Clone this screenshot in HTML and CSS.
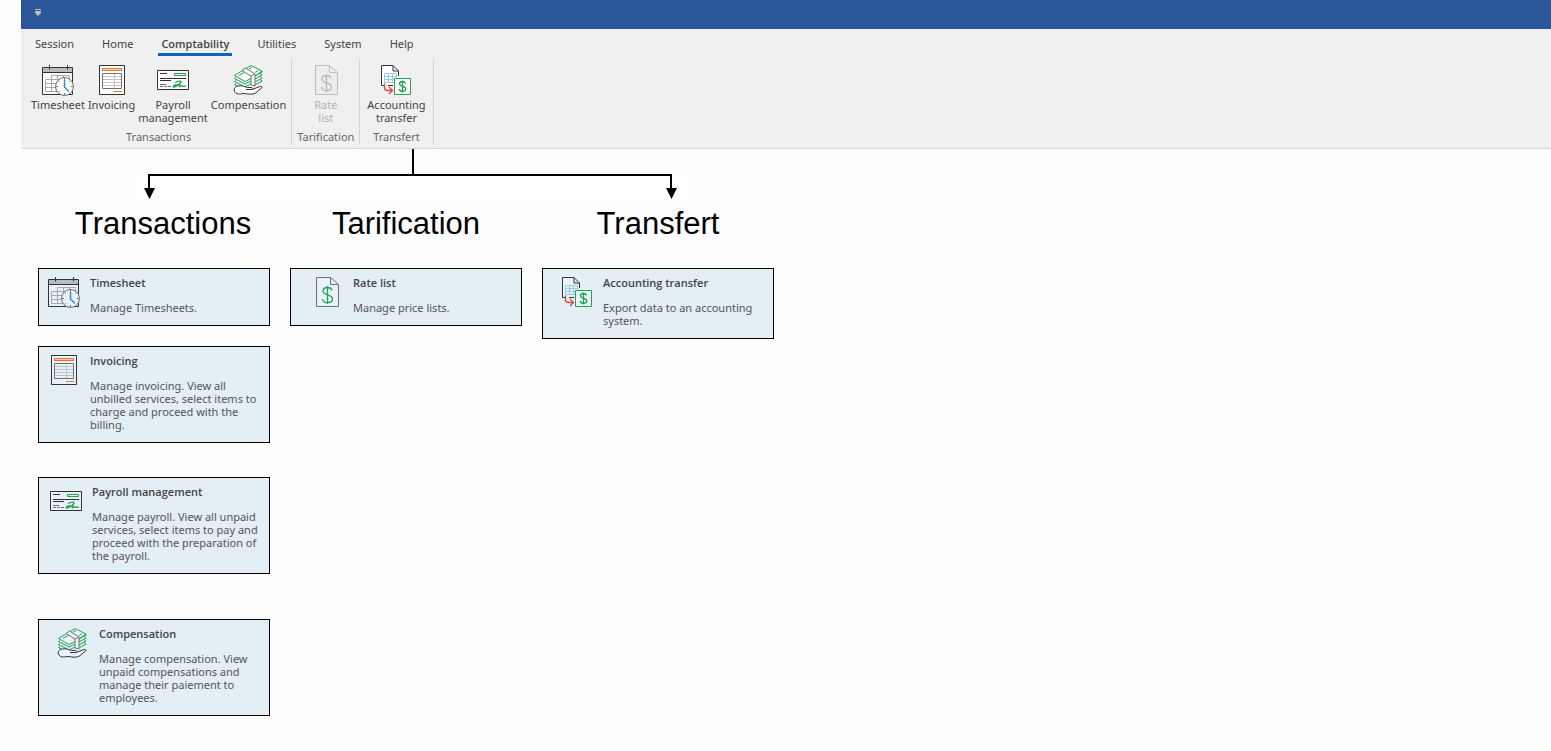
FILE: index.html
```html
<!DOCTYPE html>
<html lang="en">
<head>
<meta charset="utf-8">
<title>Comptability</title>
<link rel="stylesheet" href="styles.css">
</head>
<body>
<svg class="sprite" aria-hidden="true">
  <symbol id="i-timesheet" viewBox="0 0 32 32">
    <path class="paper ink" d="M.5 3.5h30v27H.5z"/>
    <path class="shade" d="M1 4h29v4H1z"/>
    <path class="ink" d="M.5 8.5h30M7.5 1v4.500M25.500 1v4.500"/>
    <path class="grid" d="M9.500 11.500h18M3.500 15.500h24M3.500 19.500h24M3.500 23.500h24M3.500 27.500h18M3.500 15.500v12M9.500 11.500v16M15.500 11.500v16M21.500 11.500v16M27.500 11.500v12"/>
    <circle class="paper rim" cx="22.500" cy="22.500" r="9"/>
    <path class="rim" d="M22.500 14v2M22.500 29v2M14 22.500h2M29 22.500h2M16.700 16.700l1 1M27.300 17.700l1-1M16.700 28.300l1-1"/>
    <path class="blue" d="M22.500 16v7l4.500 4.500"/>
  </symbol>
  <symbol id="i-invoicing" viewBox="0 0 32 32">
    <path class="paper ink" d="M3.500 1.500h25v29h-25z"/>
    <path class="orange" d="M6.500 4.500h19v2h-19z"/>
    <path class="grid light" d="M7 12.500h18M7 15.500h18M7 18.500h18M7 21.500h18M18.500 10v14"/>
    <path class="rim" d="M6.500 9.500h19v15h-19z"/>
    <path class="orange" d="M18 27.500h8"/>
  </symbol>
  <symbol id="i-payroll" viewBox="0 0 32 32">
    <path class="paper ink" d="M.5 6.500h31v19H.5z"/>
    <path class="ink" d="M3 9.500h7M3 14.500h26M3 16.500h11"/>
    <path class="rim" d="M3 20.500h6M3 22.500h3M7 22.500h3M11 22.500h3"/>
    <path class="green" d="M17.500 9.500h11v2h-11z"/>
    <path class="green bold" d="M18 18.500c2-1 5-2 6-1s-4 5-7 5.500c-2 0 0-2 2-2s4-1 4 0-2 2 0 1.500 2-1.500 2.500-.5 1.500 0 3.500.2"/>
  </symbol>
  <symbol id="i-compensation" viewBox="0 0 32 32">
    <path class="paper green" d="M1.500 11.500L18 1.500l11 5.500-9 6.500-8 4z"/>
    <path class="green" d="M1.500 14.500L3 13.500M1.500 14.500l10.500 5.500 6-3M1.500 17.500l1.500-1M1.500 17.500L12 23l6-3M1.500 20.500l1.500-1M1.500 20.500l4 2M22 12l7-4M22 15l7-4-2-1.500M22 18l7-4-2-1.500M22 21l7-4-2-1.500M29 7v1.500"/>
    <path class="green" d="M6 11.500l5-3M16 5l3-1.500M22 8.500l3-2"/>
    <path class="paper rim" d="M9 6.500l3.500-2.500 9.500 6v12l-4-1v-9z"/>
    <path class="rim" d="M18 12l4-2"/>
    <path class="paper ink" d="M1.500 27c-1-3 1-4.500 4-5 4-1 6 1 9 1.500h4c2 .5 1.500 2-.5 2h-5h5.500c3-.5 6-2.500 9-3 2 0 2 1 .5 2-3 2-5 5-8 5.500-4 .5-7-.5-10-.5-3 .5-7 1.500-8.500-2.500z"/>
  </symbol>
  <symbol id="i-rate" viewBox="0 0 32 32">
    <path class="paper rim" d="M5.500 1.500h14l8 7v22h-22z"/>
    <path class="rim" d="M19.500 1.500v7h8"/>
    <path class="green bold" d="M16.500 10v18M21 14.500c-.5-2-2-3-4.500-3s-4.500 1.200-4.500 3.500c0 5 9.500 2.500 9.500 8 0 2.500-2 3.700-5 3.700s-4.700-1.200-5-3.700"/>
  </symbol>
  <symbol id="i-transfer" viewBox="0 0 32 32">
    <path class="paper" d="M1.500 1.500H13l5.500 5.500v14.500h-17z"/>
    <path class="ink" d="M4 21.500H1.500v-20H13l5.500 5.500v5M13 1.500v5.500h5.500M8 21.500h5"/>
    <path class="sky" d="M4.500 9.500h12v9h-12zM4.500 12.500h12M4.500 15.500h12M8.500 9.500v9M12.500 9.500v9"/>
    <path class="paper green" d="M14.500 14.500h16v16h-16z"/>
    <path class="green bold" d="M22.500 16.500v12M25.500 19.500c-.5-1.500-1.500-2-3-2s-3 .8-3 2.300c0 3 6.300 2 6.300 5 0 1.800-1.300 2.500-3.300 2.500s-3-.8-3.300-2.300"/>
    <path class="red" d="M4.500 19.500v4.500c0 2 1 2.500 3 2.500h4.500M9 23l3.500 3.500L9 30"/>
  </symbol>
</svg>

<div class="app">
  <header class="titlebar">
    <button class="quick" type="button" aria-label="Customize quick access">
      <svg viewBox="0 0 6 8" width="6" height="8" aria-hidden="true"><path d="M0 .5h6M0 2.500h6" stroke="#c3bfb8"/><path d="M0 3h6v1L3 7 0 4z" fill="#c3bfb8"/></svg>
    </button>
  </header>

  <section class="ribbon">
    <nav class="tabs">
      <a class="tab" href="#session">Session</a>
      <a class="tab" href="#home">Home</a>
      <a class="tab active" href="#comptability" aria-current="page">Comptability</a>
      <a class="tab" href="#utilities">Utilities</a>
      <a class="tab" href="#system">System</a>
      <a class="tab" href="#help">Help</a>
    </nav>
    <div class="groups">
      <div class="group wide">
        <div class="commands">
          <button class="command" type="button"><svg class="icon" aria-hidden="true"><use href="#i-timesheet"/></svg>Timesheet</button>
          <button class="command" type="button"><svg class="icon" aria-hidden="true"><use href="#i-invoicing"/></svg>Invoicing</button>
          <button class="command" type="button"><svg class="icon" aria-hidden="true"><use href="#i-payroll"/></svg>Payroll<br>management</button>
          <button class="command" type="button"><svg class="icon" aria-hidden="true"><use href="#i-compensation"/></svg>Compensation</button>
        </div>
        <div class="group-name">Transactions</div>
      </div>
      <div class="group">
        <div class="commands">
          <button class="command" type="button" disabled><svg class="icon" aria-hidden="true"><use href="#i-rate"/></svg>Rate<br>list</button>
        </div>
        <div class="group-name">Tarification</div>
      </div>
      <div class="group roomy">
        <div class="commands">
          <button class="command" type="button"><svg class="icon" aria-hidden="true"><use href="#i-transfer"/></svg>Accounting<br>transfer</button>
        </div>
        <div class="group-name">Transfert</div>
      </div>
    </div>
  </section>

  <main class="overview">
    <svg class="connector" viewBox="0 0 550 55" aria-hidden="true">
      <path class="halo" d="M0 25h550v29H0z"/>
      <path class="line" d="M275 0v26M10 26h524M11 26v14M533 26v14"/>
      <path d="M6 39h11l-5.500 11zM528 39h11l-5.500 11z"/>
    </svg>
    <div class="columns">
      <section class="column first">
        <h2>Transactions</h2>
        <article class="card">
          <svg class="icon" aria-hidden="true"><use href="#i-timesheet"/></svg>
          <div class="info"><h3>Timesheet</h3><p>Manage Timesheets.</p></div>
        </article>
        <article class="card">
          <svg class="icon" aria-hidden="true"><use href="#i-invoicing"/></svg>
          <div class="info"><h3>Invoicing</h3><p>Manage invoicing. View all<br>unbilled services, select items to<br>charge and proceed with the<br>billing.</p></div>
        </article>
        <article class="card payroll">
          <svg class="icon" aria-hidden="true"><use href="#i-payroll"/></svg>
          <div class="info"><h3>Payroll management</h3><p>Manage payroll. View all unpaid<br>services, select items to pay and<br>proceed with the preparation of<br>the payroll.</p></div>
        </article>
        <article class="card compensation">
          <svg class="icon" aria-hidden="true"><use href="#i-compensation"/></svg>
          <div class="info"><h3>Compensation</h3><p>Manage compensation. View<br>unpaid compensations and<br>manage their paiement to<br>employees.</p></div>
        </article>
      </section>
      <section class="column">
        <h2>Tarification</h2>
        <article class="card rate">
          <svg class="icon" aria-hidden="true"><use href="#i-rate"/></svg>
          <div class="info"><h3>Rate list</h3><p>Manage price lists.</p></div>
        </article>
      </section>
      <section class="column">
        <h2>Transfert</h2>
        <article class="card transfer">
          <svg class="icon" aria-hidden="true"><use href="#i-transfer"/></svg>
          <div class="info"><h3>Accounting transfer</h3><p>Export data to an accounting<br>system.</p></div>
        </article>
      </section>
    </div>
  </main>
</div>
</body>
</html>
```

FILE: styles.css
```css
* { box-sizing: border-box; }

body {
  margin: 0;
  background: #fdfdfd;
  color: #444;
  font: 11px/13px "Noto Sans", "Open Sans", sans-serif;
}

button {
  border: 0;
  padding: 0;
  background: none;
  color: inherit;
  font: inherit;
}

.sprite { position: absolute; width: 0; height: 0; }

/* Icon strokes */
.icon {
  --paper: #fff;
  --ink: #333336;
  --rim: #707074;
  --green: #1fa350;
  display: block;
  flex: none;
  width: 32px;
  height: 32px;
  fill: none;
}
.ink { stroke: var(--ink); }
.rim { stroke: var(--rim); }
.green { stroke: var(--green); }
.bold { stroke-width: 1.3; }
.paper { fill: var(--paper); }
.shade { fill: #b9bcbe; }
.grid { stroke: #a3a9ad; }
.light { stroke: #bfc3c6; }
.blue { stroke: #2e8fdc; stroke-width: 1.5; }
.sky { stroke: #9acbea; }
.red { stroke: #e8413c; stroke-width: 1.3; }
.orange { stroke: #e27430; fill: #ffd0a0; }

/* Window chrome */
.app { margin-left: 21px; }
.titlebar {
  height: 29px;
  padding: 9px 14px;
  background: #2b579a;
}
.quick { display: block; }
.quick svg { display: block; }

.ribbon {
  padding-top: 8px;
  border-bottom: 1px solid #d4d4d4;
  background: #f0f0f0;
}
.tabs {
  display: flex;
  gap: 22px;
  padding-left: 11px;
}
.tab {
  padding: 0 3px 3px;
  border-bottom: 3px solid transparent;
  color: #444;
  text-decoration: none;
}
.tab.active {
  border-color: #0a64c8;
  font-family: "Open Sans", "Noto Sans", sans-serif;
  font-weight: 600;
}
.groups {
  display: flex;
  padding: 3px 0;
}
.group {
  display: flex;
  flex-direction: column;
  gap: 6px;
  padding: 5px 5px 2px;
  border-right: 1px solid #d2d2d2;
}
.group.wide { padding-left: 10px; }
.group.roomy { padding-left: 7px; padding-right: 7px; }
.commands {
  display: flex;
  gap: 3px;
  justify-content: center;
  min-height: 60px;
}
.command {
  display: flex;
  flex-direction: column;
  align-items: center;
  text-align: center;
}
.command .icon { margin-bottom: 2px; }
.command:disabled { color: #b1b1b1; }
.command:disabled .icon {
  --paper: #ededed;
  --rim: #bdbdbd;
  --green: #b8b8b8;
}
.group-name {
  color: #666;
  text-align: center;
}

/* Overview */
.overview { padding-left: 17px; }
.connector {
  display: block;
  width: 550px;
  height: 55px;
  margin-left: 100px;
}
.halo { fill: #fff; }
.line { fill: none; stroke: #000; stroke-width: 2; }
.columns {
  display: flex;
  align-items: flex-start;
  gap: 20px;
}
.column { width: 232px; }
h2 {
  margin: 0 0 24px;
  color: #000;
  font: 31px/40px "Liberation Sans", Arial, sans-serif;
  text-align: center;
}
.first h2 { padding-left: 18px; }
.card {
  display: flex;
  gap: 10px;
  margin-bottom: 20px;
  padding: 7px 8px 11px 9px;
  border: 1px solid #000;
  background: #e3eef5;
}
.card .icon { --paper: #e9f2f8; }
.card.payroll { margin-top: 34px; padding-left: 11px; }
.card.compensation { margin-top: 45px; padding-left: 18px; }
.card.rate { padding-left: 20px; }
.card.transfer { padding-left: 18px; }
.info { white-space: nowrap; }
h3 {
  margin: 0 0 12px;
  font-family: "Open Sans", "Noto Sans", sans-serif;
  font-size: 11px;
  font-weight: 600;
  line-height: 13px;
}
p { margin: 0; color: #555; }
```
